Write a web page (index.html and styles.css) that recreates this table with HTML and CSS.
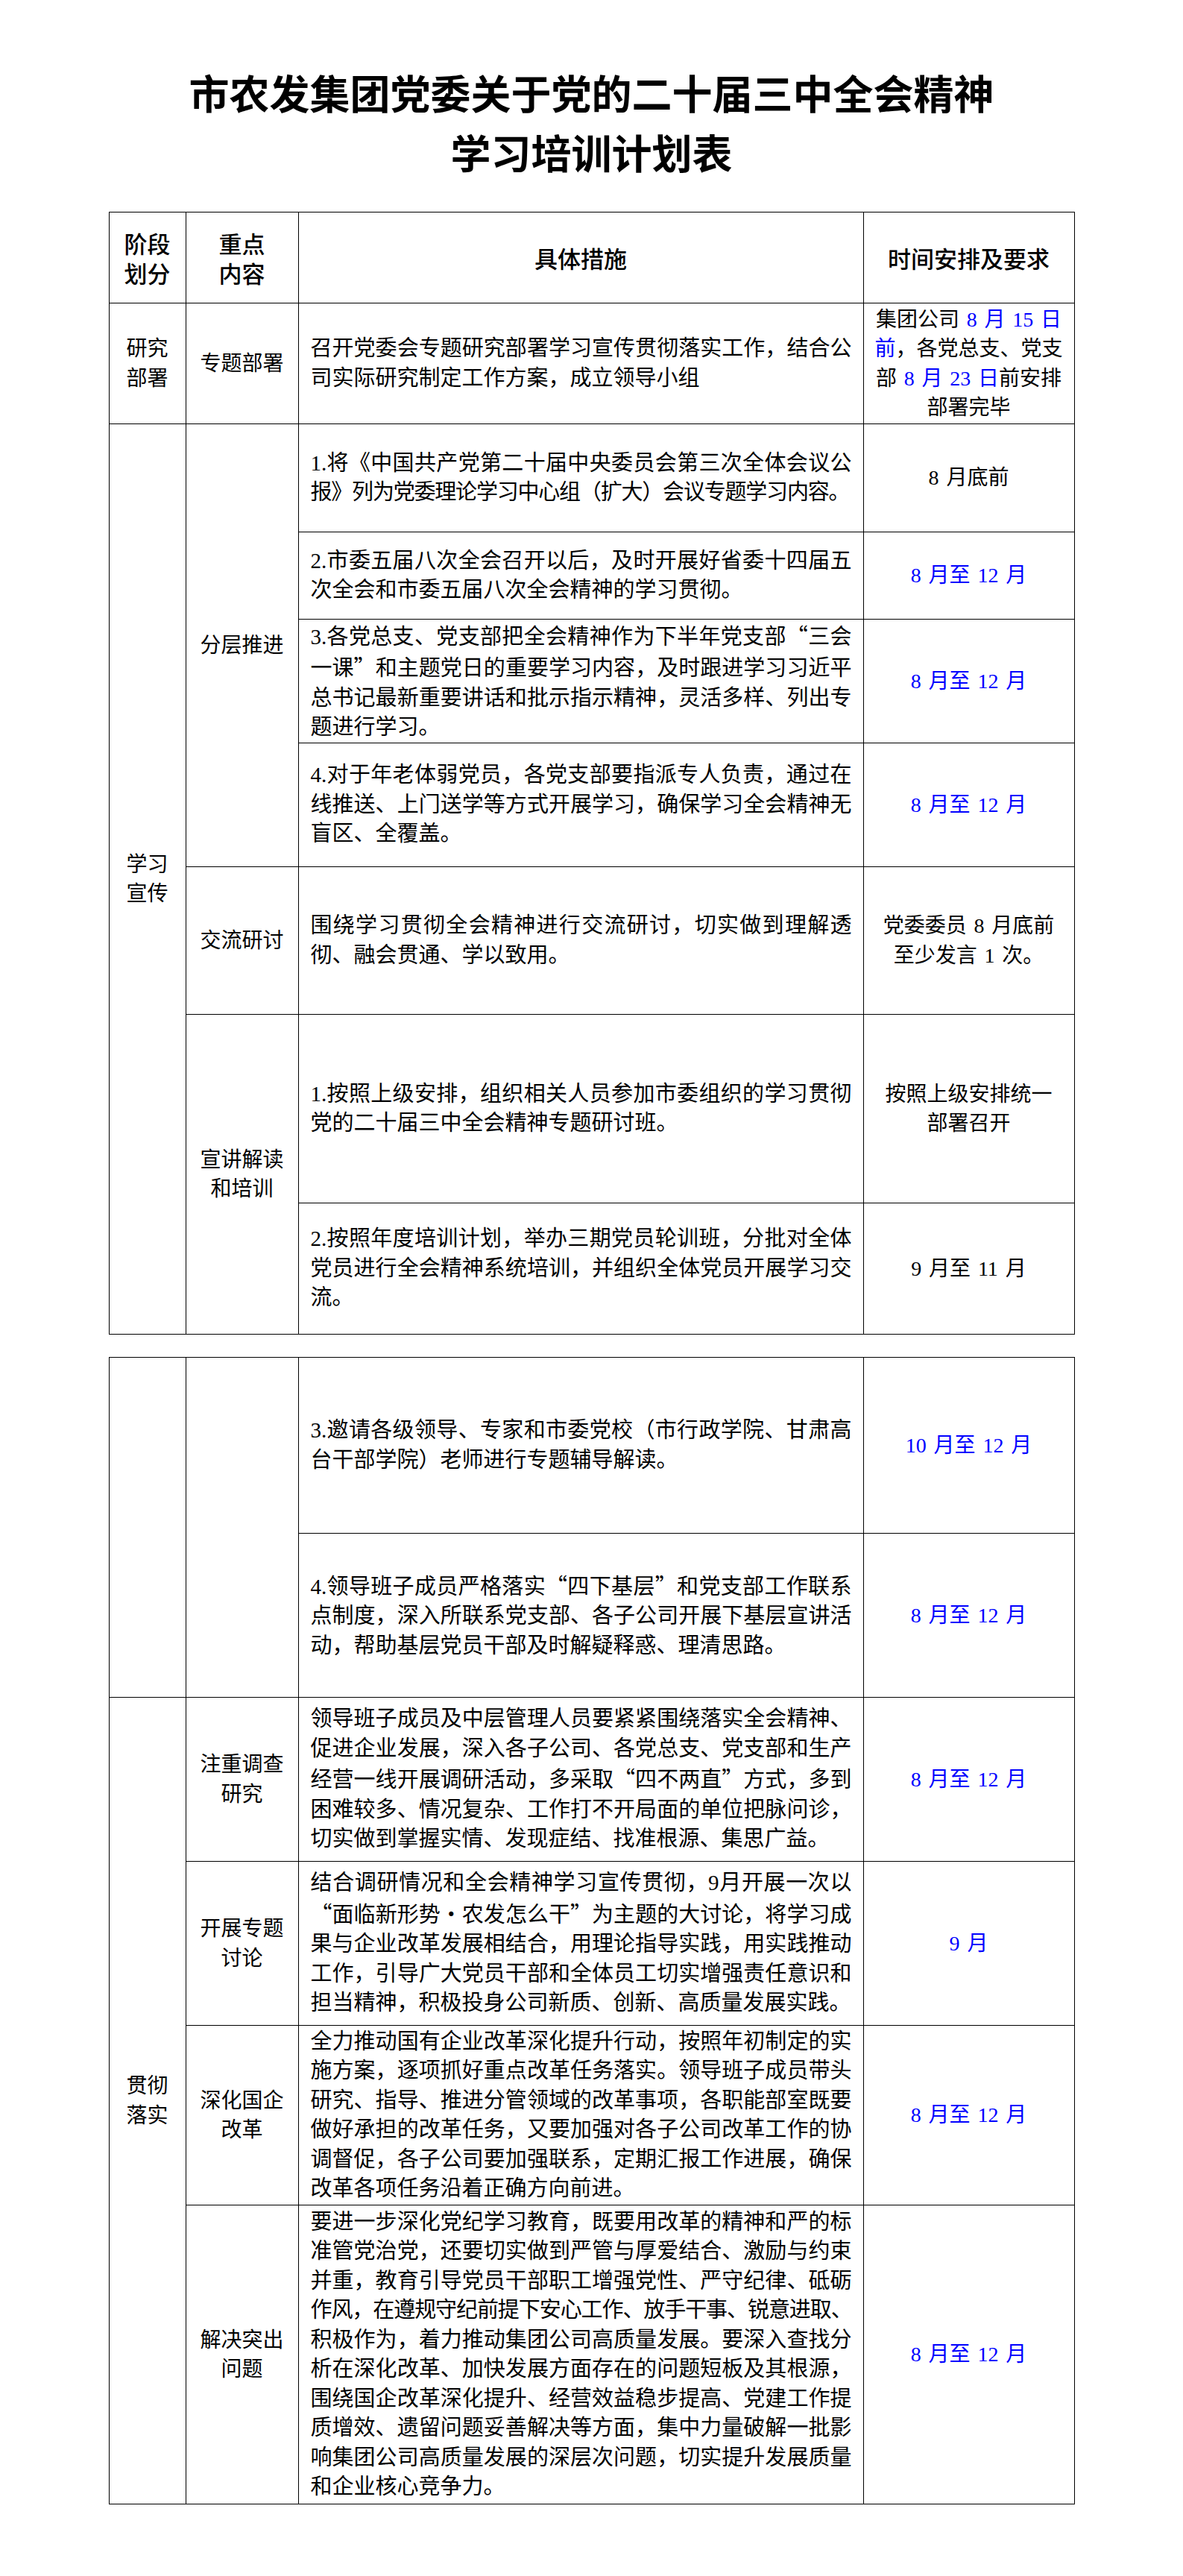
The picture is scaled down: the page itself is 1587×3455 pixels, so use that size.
FILE: index.html
```html
<!DOCTYPE html>
<html lang="zh-CN">
<head>
<meta charset="utf-8">
<title>市农发集团党委关于党的二十届三中全会精神学习培训计划表</title>
<link rel="stylesheet" href="styles.css">
</head>
<body>
<h1 class="title">市农发集团党委关于党的二十届三中全会精神<br>学习培训计划表</h1>

<table class="plan">
  <colgroup>
    <col class="col-stage">
    <col class="col-focus">
    <col class="col-measure">
    <col class="col-time">
  </colgroup>
  <tr class="row-head">
    <th>阶段<br>划分</th>
    <th>重点<br>内容</th>
    <th>具体措施</th>
    <th>时间安排及要求</th>
  </tr>
  <tr class="row-a">
    <td class="stage">研究部署</td>
    <td class="focus">专题部署</td>
    <td class="measure">召开党委会专题研究部署学习宣传贯彻落实工作，结合公司实际研究制定工作方案，成立领导小组</td>
    <td class="time">集团公司 <span class="blue">8 月 15 日<br>前</span>，各党总支、党支<br>部 <span class="blue">8 月 23 日</span>前安排<br>部署完毕</td>
  </tr>
  <tr class="row-b">
    <td class="stage" rowspan="7">学习宣传</td>
    <td class="focus" rowspan="4">分层推进</td>
    <td class="measure">1.将《中国共产党第二十届中央委员会第三次全体会议公<span class="tight">报》列为党委理论学习中心组（扩大）会议专题学习内容。</span></td>
    <td class="time">8 月底前</td>
  </tr>
  <tr class="row-c">
    <td class="measure">2.市委五届八次全会召开以后，及时开展好省委十四届五次全会和市委五届八次全会精神的学习贯彻。</td>
    <td class="time blue">8 月至 12 月</td>
  </tr>
  <tr class="row-d">
    <td class="measure">3.各党总支、党支部把全会精神作为下半年党支部<span class="q">“</span>三会一课<span class="q">”</span>和主题党日的重要学习内容，及时跟进学习习近平总书记最新重要讲话和批示指示精神，灵活多样、列出专题进行学习。</td>
    <td class="time blue">8 月至 12 月</td>
  </tr>
  <tr class="row-d">
    <td class="measure">4.对于年老体弱党员，各党支部要指派专人负责，通过在线推送、上门送学等方式开展学习，确保学习全会精神无盲区、全覆盖。</td>
    <td class="time blue">8 月至 12 月</td>
  </tr>
  <tr class="row-e">
    <td class="focus">交流研讨</td>
    <td class="measure">围绕学习贯彻全会精神进行交流研讨，切实做到理解透彻、融会贯通、学以致用。</td>
    <td class="time">党委委员 8 月底前<br>至少发言 1 次。</td>
  </tr>
  <tr class="row-f">
    <td class="focus" rowspan="2">宣讲解读和培训</td>
    <td class="measure">1.按照上级安排，组织相关人员参加市委组织的学习贯彻党的二十届三中全会精神专题研讨班。</td>
    <td class="time">按照上级安排统一<br>部署召开</td>
  </tr>
  <tr class="row-g">
    <td class="measure">2.按照年度培训计划，举办三期党员轮训班，分批对全体党员进行全会精神系统培训，并组织全体党员开展学习交流。</td>
    <td class="time">9 月至 11 月</td>
  </tr>
</table>

<table class="plan">
  <colgroup>
    <col class="col-stage">
    <col class="col-focus">
    <col class="col-measure">
    <col class="col-time">
  </colgroup>
  <tr class="row-h">
    <td class="stage" rowspan="2"></td>
    <td class="focus" rowspan="2"></td>
    <td class="measure">3.邀请各级领导、专家和市委党校（市行政学院、甘肃高台干部学院）老师进行专题辅导解读。</td>
    <td class="time blue">10 月至 12 月</td>
  </tr>
  <tr class="row-i">
    <td class="measure">4.领导班子成员严格落实<span class="q">“</span>四下基层<span class="q">”</span>和党支部工作联系点制度，深入所联系党支部、各子公司开展下基层宣讲活动，帮助基层党员干部及时解疑释惑、理清思路。</td>
    <td class="time blue">8 月至 12 月</td>
  </tr>
  <tr class="row-i">
    <td class="stage" rowspan="4">贯彻落实</td>
    <td class="focus">注重调查研究</td>
    <td class="measure">领导班子成员及中层管理人员要紧紧围绕落实全会精神、促进企业发展，深入各子公司、各党总支、党支部和生产经营一线开展调研活动，多采取<span class="q">“</span>四不两直<span class="q">”</span>方式，多到困难较多、情况复杂、工作打不开局面的单位把脉问诊，切实做到掌握实情、发现症结、找准根源、集思广益。</td>
    <td class="time blue">8 月至 12 月</td>
  </tr>
  <tr class="row-i">
    <td class="focus">开展专题讨论</td>
    <td class="measure">结合调研情况和全会精神学习宣传贯彻，9月开展一次以<span class="q">“</span>面临新形势<span class="q">·</span>农发怎么干<span class="q">”</span>为主题的大讨论，将学习成果与企业改革发展相结合，用理论指导实践，用实践推动工作，引导广大党员干部和全体员工切实增强责任意识和担当精神，积极投身公司新质、创新、高质量发展实践。</td>
    <td class="time blue">9 月</td>
  </tr>
  <tr class="row-j">
    <td class="focus">深化国企改革</td>
    <td class="measure">全力推动国有企业改革深化提升行动，按照年初制定的实施方案，逐项抓好重点改革任务落实。领导班子成员带头研究、指导、推进分管领域的改革事项，各职能部室既要做好承担的改革任务，又要加强对各子公司改革工作的协调督促，各子公司要加强联系，定期汇报工作进展，确保改革各项任务沿着正确方向前进。</td>
    <td class="time blue">8 月至 12 月</td>
  </tr>
  <tr class="row-k">
    <td class="focus">解决突出问题</td>
    <td class="measure">要进一步深化党纪学习教育，既要用改革的精神和严的标准管党治党，还要切实做到严管与厚爱结合、激励与约束并重，教育引导党员干部职工增强党性、严守纪律、砥砺<span class="tight">作风，在遵规守纪前提下安心工作、放手干事、锐意进取、</span>积极作为，着力推动集团公司高质量发展。要深入查找分析在深化改革、加快发展方面存在的问题短板及其根源，围绕国企改革深化提升、经营效益稳步提高、党建工作提质增效、遗留问题妥善解决等方面，集中力量破解一批影响集团公司高质量发展的深层次问题，切实提升发展质量和企业核心竞争力。</td>
    <td class="time blue">8 月至 12 月</td>
  </tr>
</table>
</body>
</html>
```

FILE: styles.css
```css
html, body {
  margin: 0;
  padding: 0;
  background: #ffffff;
}

body {
  color: #000000;
  font-family: "Liberation Serif", "Noto Sans CJK SC", serif;
}

.title {
  margin: 84px 0 0;
  text-align: center;
  font-family: "Noto Sans CJK SC", sans-serif;
  font-weight: 700;
  font-size: 54px;
  line-height: 80px;
}

.plan {
  width: 1295px;
  margin: 40px auto 0;
  border-collapse: collapse;
  table-layout: fixed;
}

.plan + .plan {
  margin-top: 30px;
}

.col-stage { width: 103px; }
.col-focus { width: 151px; }
.col-measure { width: 758px; }
.col-time { width: 283px; }

.plan th,
.plan td {
  border: 1px solid #000000;
  padding: 0;
  vertical-align: middle;
  text-align: center;
  font-weight: 400;
  font-size: 28px;
  line-height: 39.5px;
}

.plan th {
  font-family: "Noto Sans CJK SC", sans-serif;
  font-size: 31px;
  font-weight: 500;
  line-height: 40px;
}

.plan td.stage {
  padding: 0 14px;
}

.plan td.focus {
  padding: 0 15px;
}

.plan td.measure {
  font-size: 29px;
  text-align: justify;
  padding: 0 15px 0 16px;
}

.plan td.time {
  padding: 0 10px;
  word-spacing: 0.1em;
  white-space: nowrap;
}

.blue,
.plan td.blue {
  color: #0000ff;
}

.q {
  font-family: "Noto Sans CJK SC", sans-serif;
  font-feature-settings: "fwid" 1;
}

.tight {
  letter-spacing: -1.2px;
}

.row-head { height: 122px; }
.row-a { height: 162px; }
.row-b { height: 145px; }
.row-c { height: 117px; }
.row-d { height: 166px; }
.row-e { height: 198px; }
.row-f { height: 253px; }
.row-g { height: 176px; }
.row-h { height: 236px; }
.row-i { height: 220px; }
.row-j { height: 241px; }
.row-k { height: 401px; }
```
